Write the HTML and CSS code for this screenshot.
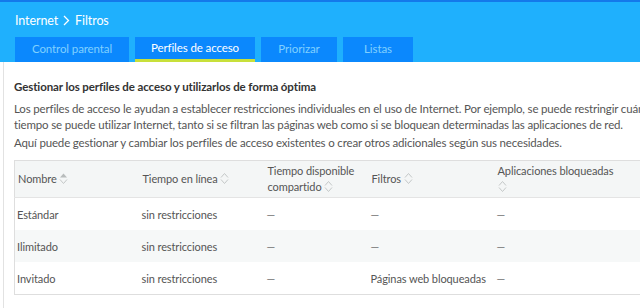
FILE: index.html
```html
<!DOCTYPE html>
<html lang="es">
<head>
<meta charset="utf-8">
<link rel="stylesheet" href="styles.css">
</head>
<body>
<header class="top">
  <div class="crumb">Internet
    <svg class="chev" width="7" height="11" viewBox="0 0 7 11"><path d="M1 1 L5.5 5.5 L1 10" fill="none" stroke="#fff" stroke-width="1.3"/></svg>
    Filtros</div>
  <nav class="tabs">
    <a class="tab">Control parental</a>
    <a class="tab active">Perfiles de acceso</a>
    <a class="tab">Priorizar</a>
    <a class="tab">Listas</a>
  </nav>
</header>
<main class="page">
  <h1 class="title">Gestionar los perfiles de acceso y utilizarlos de forma óptima</h1>
  <p class="text">Los perfiles de acceso le ayudan a establecer restricciones individuales en el uso de Internet. Por ejemplo, se puede restringir cuánto tiempo se puede utilizar Internet, tanto si se filtran las páginas web como si se bloquean determinadas las aplicaciones de red.</p>
  <p class="text">Aquí puede gestionar y cambiar los perfiles de acceso existentes o crear otros adicionales según sus necesidades.</p>
  <table class="grid">
    <colgroup>
      <col class="c1"><col class="c2"><col class="c3"><col class="c4"><col class="c5">
    </colgroup>
    <thead>
      <tr>
        <th>Nombre <svg class="sort" width="9" height="13" viewBox="0 0 9 13"><path d="M1 5.5 L4.5 1.5 L8 5.5 Z" fill="#b8bcbc"/><path d="M1 7.5 L4.5 11.5 L8 7.5" fill="none" stroke="#c4c8c8" stroke-width="1"/></svg></th>
        <th>Tiempo en línea <svg class="sort" width="9" height="13" viewBox="0 0 9 13"><path d="M1 5.5 L4.5 1.5 L8 5.5" fill="none" stroke="#c4c8c8" stroke-width="1"/><path d="M1 7.5 L4.5 11.5 L8 7.5" fill="none" stroke="#c4c8c8" stroke-width="1"/></svg></th>
        <th>Tiempo disponible compartido <svg class="sort" width="9" height="13" viewBox="0 0 9 13"><path d="M1 5.5 L4.5 1.5 L8 5.5" fill="none" stroke="#c4c8c8" stroke-width="1"/><path d="M1 7.5 L4.5 11.5 L8 7.5" fill="none" stroke="#c4c8c8" stroke-width="1"/></svg></th>
        <th>Filtros <svg class="sort" width="9" height="13" viewBox="0 0 9 13"><path d="M1 5.5 L4.5 1.5 L8 5.5" fill="none" stroke="#c4c8c8" stroke-width="1"/><path d="M1 7.5 L4.5 11.5 L8 7.5" fill="none" stroke="#c4c8c8" stroke-width="1"/></svg></th>
        <th>Aplicaciones bloqueadas <svg class="sort" width="9" height="13" viewBox="0 0 9 13"><path d="M1 5.5 L4.5 1.5 L8 5.5" fill="none" stroke="#c4c8c8" stroke-width="1"/><path d="M1 7.5 L4.5 11.5 L8 7.5" fill="none" stroke="#c4c8c8" stroke-width="1"/></svg></th>
      </tr>
    </thead>
    <tbody>
      <tr><td>Estándar</td><td>sin restricciones</td><td class="dash">—</td><td class="dash">—</td><td class="dash">—</td></tr>
      <tr class="alt"><td>Ilimitado</td><td>sin restricciones</td><td class="dash">—</td><td class="dash">—</td><td class="dash">—</td></tr>
      <tr><td>Invitado</td><td>sin restricciones</td><td class="dash">—</td><td>Páginas web bloqueadas</td><td class="dash">—</td></tr>
    </tbody>
  </table>
</main>
</body>
</html>
```
FILE: styles.css
```css
html, body {
  margin: 0;
  padding: 0;
  background: #fff;
  overflow: hidden;
}
body {
  font-family: "Lato", "Liberation Sans", sans-serif;
  width: 640px;
  height: 308px;
  overflow: hidden;
}
.top {
  background: #1fb0fd;
  border-top: 2px solid #1479ea;
  padding: 11px 0 0 15px;
  height: 49px;
  display: flex;
  flex-direction: column;
}
.crumb {
  color: #fff;
  font-size: 12.5px;
  letter-spacing: -0.1px;
  height: 15px;
  line-height: 15px;
  display: flex;
  align-items: center;
  gap: 4px;
}
.chev { margin: 0 1px; }
.tabs {
  display: flex;
  gap: 6px;
  margin-top: 9px;
}
.tab {
  background: #0b88fd;
  color: #80d0ff;
  font-size: 11.5px;
  letter-spacing: -0.1px;
  height: 25px;
  line-height: 24px;
  box-sizing: border-box;
  text-align: center;
}
.tab:nth-child(1) { width: 114px; }
.tab:nth-child(2) { width: 120px; }
.tab:nth-child(3) { width: 76px; }
.tab:nth-child(4) { width: 70px; }
.tab.active {
  color: #fff;
  border-bottom: 3px solid #c8e03a;
  line-height: 22px;
}
.page {
  margin-left: 3px;
  border-left: 1px solid #e2e2e2;
  padding: 17px 0 0 10px;
  height: 229px;
  width: 626px;
  overflow: hidden;
}
.title {
  margin: 0 0 6px;
  font-size: 11.5px;
  letter-spacing: -0.1px;
  font-weight: 700;
  color: #333;
  line-height: 16px;
}
.text {
  margin: 0 0 2px;
  font-size: 11.5px;
  letter-spacing: -0.16px;
  color: #555;
  line-height: 16px;
  width: 650px;
}
.grid {
  margin-top: 9px;
  border-collapse: collapse;
  table-layout: fixed;
  width: 700px;
  border: 1px solid #dedede;
  font-size: 11px;
  letter-spacing: -0.1px;
  color: #555;
}
.c1 { width: 125px; }
.c2 { width: 125px; }
.c3 { width: 104px; }
.c4 { width: 126px; }
.c5 { width: 220px; }
.grid th {
  background: #f4f6f6;
  font-weight: normal;
  text-align: left;
  height: 36px;
  padding: 0 4px 0 3px;
  line-height: 16px;
  border-bottom: 1px solid #e4e4e4;
  vertical-align: middle;
}
.grid th:last-child { padding-right: 99px; }
.sort { vertical-align: -2px; }
.grid td {
  height: 32px;
  padding: 0 3px 0 2px;
  vertical-align: middle;
}
.grid tr.alt td { background: #f6f8f8; }
.dash { color: #777; }
```
